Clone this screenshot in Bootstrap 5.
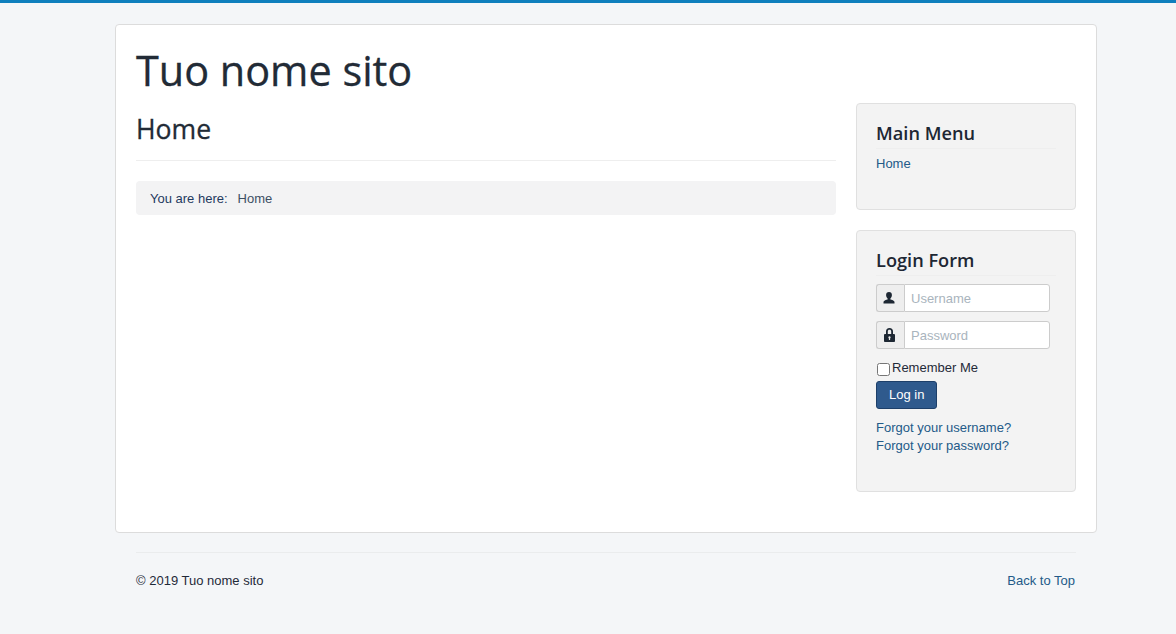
<!DOCTYPE html>
<html lang="en">
<head>
    <meta charset="UTF-8">
    <meta name="viewport" content="width=device-width, initial-scale=1.0">
    <title>Tuo nome sito - Home</title>
    <link href="https://cdn.jsdelivr.net/npm/bootstrap@5.3.0/dist/css/bootstrap.min.css" rel="stylesheet">
    <style>
        body { background: #f4f6f8; border-top: 3px solid #0f7fbd; font-family: "Liberation Sans", Arial, sans-serif; font-size: 13px; line-height: 18px; color: #1f2a38; }
        a { color: #235a88; text-decoration: none; }
        .page-wrap { width: 982px; margin: 21px 0 0 115px; }
        .site-box { background: #fff; border: 1px solid #dcdcdc; border-radius: 4px; padding: 20px; height: 509px; }
        .site-title { font-family: "Open Sans", sans-serif; font-size: 41.4px; line-height: 48px; font-weight: 500; color: #222b36; margin: 1px 0 9px; -webkit-text-stroke: .3px #222b36; }
        .main-col { width: 700px; }
        .side-col { width: 220px; }
        .page-head { font-family: "Open Sans", sans-serif; font-size: 26.6px; line-height: 36px; font-weight: 500; color: #222b36; margin: 0 0 20px; padding: 8px 0 12px; border-bottom: 1px solid #eee; height: 58px; -webkit-text-stroke: .3px #222b36; }
        .crumbs { background: #f3f3f4; border-radius: 4px; padding: 9px 14px 7px; height: 34px; color: #1f3a5f; }
        .crumbs span + span { margin-left: 10px; color: #3d4f63; }
        .side-well { background: #f3f3f3; border: 1px solid #e0e0e0; border-radius: 4px; padding: 19px; }
        .well-title { font-family: "Open Sans", sans-serif; font-size: 18.2px; line-height: 20px; font-weight: 600; color: #1d2733; margin: 0 0 6px; padding-bottom: 5px; border-bottom: 1px solid #eee; }
        .menu-well { height: 107px; margin-bottom: 20px; }
        .login-fields { padding-top: 2px; }
        .field-row { width: 174px; height: 28px; margin-bottom: 9px; }
        .field-icon { width: 28px; padding-right: 3px; background: #eee; border: 1px solid #ccc; border-right: 0; border-radius: 3px 0 0 3px; }
        .field-input { flex: 1; min-width: 0; border: 1px solid #ccc; border-radius: 0 3px 3px 0; padding: 5px 6px 3px; font: inherit; background: #fff; outline: 0; }
        .field-input::placeholder { color: #a9b4bd; opacity: 1; }
        .remember-row { color: #1f2a38; height: 19px; padding-top: 1px; margin-bottom: 4px; }
        .remember-row input { width: 13px; height: 13px; margin: 4px 2px 0 1px; }
        .login-btn { background: #2f5a8d; border: 1px solid #1d3f69; border-radius: 3px; color: #fff; font: inherit; padding: 4px 12px; height: 28px; width: 61px; white-space: nowrap; }
        .forgot-links { margin-top: 10px; padding-bottom: 17px; }
        .foot-rule { border-top: 1px solid #eaeced; margin: 19px 21px 0; padding-top: 19px; }
        .top-link { padding-right: 1px; }
    </style>
</head>
<body>
    <div class="page-wrap">
        <div class="site-box">
            <h1 class="site-title">Tuo nome sito</h1>
            <div class="d-flex justify-content-between">
                <main class="main-col">
                    <h2 class="page-head">Home</h2>
                    <div class="crumbs"><span>You are here:</span><span>Home</span></div>
                </main>
                <aside class="side-col">
                    <div class="side-well menu-well">
                        <h3 class="well-title">Main Menu</h3>
                        <a href="#">Home</a>
                    </div>
                    <div class="side-well">
                        <h3 class="well-title">Login Form</h3>
                        <form class="login-fields">
                            <div class="field-row d-flex">
                                <span class="field-icon d-flex align-items-center justify-content-center">
                                    <svg width="12" height="12" viewBox="0 0 12 12" fill="#1d2733"><path d="M6 0c1.900 0 2.900 1.300 2.900 3.100 0 1.400-.6 2.700-1.500 3.300v1.100c1.500.5 3.600.9 4.100 2.200v1.800H.5V9.700c.5-1.300 2.600-1.700 4.100-2.200V6.400C3.700 5.800 3.100 4.500 3.100 3.100 3.100 1.300 4.100 0 6 0z"/></svg>
                                </span>
                                <input class="field-input" type="text" placeholder="Username">
                            </div>
                            <div class="field-row d-flex">
                                <span class="field-icon d-flex align-items-center justify-content-center">
                                    <svg width="11" height="14" viewBox="0 0 11 14" fill="#1d2733"><path fill-rule="evenodd" d="M5.500 0C7.700 0 9 1.400 9 3.500V6h.9c.6 0 1.100.5 1.100 1.100v5.800c0 .6-.5 1.100-1.100 1.100H1.100C.5 14 0 13.500 0 12.900V7.100C0 6.500.5 6 1.100 6H2V3.500C2 1.400 3.300 0 5.500 0zM5.500 1.800C4.400 1.800 3.800 2.400 3.800 3.500V6h3.400V3.500c0-1.100-.6-1.700-1.700-1.700zM5.500 8.200a1.200 1.200 0 0 0-.6 2.200V12h1.200v-1.600a1.200 1.200 0 0 0-.6-2.200z"/></svg>
                                </span>
                                <input class="field-input" type="password" placeholder="Password">
                            </div>
                            <label class="remember-row d-flex"><input type="checkbox">Remember Me</label>
                            <button type="button" class="login-btn">Log in</button>
                            <div class="forgot-links">
                                <a class="d-block" href="#">Forgot your username?</a>
                                <a class="d-block" href="#">Forgot your password?</a>
                            </div>
                        </form>
                    </div>
                </aside>
            </div>
        </div>
        <footer class="foot-rule d-flex justify-content-between">
            <span>© 2019 Tuo nome sito</span>
            <a class="top-link" href="#">Back to Top</a>
        </footer>
    </div>
    <script src="https://cdn.jsdelivr.net/npm/bootstrap@5.3.0/dist/js/bootstrap.bundle.min.js"></script>
</body>
</html>
